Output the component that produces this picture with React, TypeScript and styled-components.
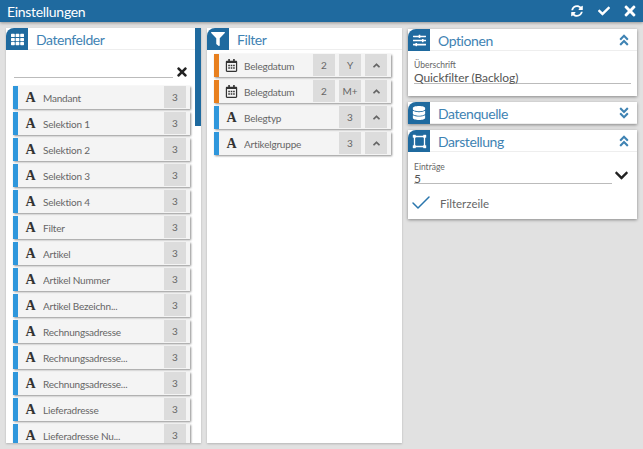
import styled, { createGlobalStyle } from "styled-components"
import {
  FaAngleDoubleDown,
  FaAngleDoubleUp,
  FaAngleUp,
  FaCheck,
  FaChevronDown,
  FaDatabase,
  FaFilter,
  FaRegCalendarAlt,
  FaSlidersH,
  FaSyncAlt,
  FaTh,
  FaTimes,
} from "react-icons/fa"
import { Check } from "lucide-react"

const blue = "#1f6a9f"
const titleBlue = "#3f83b3"

const GlobalStyle = createGlobalStyle`
  html, body {
    margin: 0;
    padding: 0;
    height: 100%;
    background: #e1e1e1;
  }
  body {
    font-family: Lato, "Open Sans", sans-serif;
    color: #444;
    overflow: hidden;
  }
`

const Page = styled.div`
  width: 643px;
  height: 449px;
  display: flex;
  flex-direction: column;
  overflow: hidden;
`

const TopBar = styled.header`
  height: 22px;
  flex: none;
  background: ${blue};
  color: #fff;
  display: flex;
  align-items: center;
  justify-content: space-between;
  padding: 0 5px 0 7px;
  box-shadow: 0 1px 3px rgba(0, 0, 0, 0.35);
  font-size: 14px;
  letter-spacing: -0.3px;
`

const TopActions = styled.div`
  display: flex;
  align-items: center;
  gap: 15px;
  font-size: 12px;

  svg {
    display: block;
  }
  svg:last-child {
    margin-left: -3px;
  }
`

const Columns = styled.main`
  flex: 1;
  display: flex;
  gap: 6px;
  padding: 6px;
  min-height: 0;
`

const Panel = styled.section`
  position: relative;
  width: 195px;
  flex: none;
  background: #fff;
  box-shadow: 0 1px 2px rgba(0, 0, 0, 0.2);
  overflow: hidden;
  display: flex;
  flex-direction: column;
`

const Side = styled.div`
  width: 229px;
  flex: none;
  display: flex;
  flex-direction: column;
  gap: 6px;
  padding-top: 1px;
`

const Card = styled.section`
  background: #fff;
  box-shadow: 0 1px 3px rgba(0, 0, 0, 0.4);
`

const Head = styled.div<{ $inset?: boolean }>`
  height: 22px;
  box-sizing: border-box;
  display: flex;
  align-items: flex-start;
  border-bottom: 1px solid #eee;
  margin-right: ${(p) => (p.$inset ? "6px" : "0")};
  padding-right: 6px;
  flex: none;
`

const IconTab = styled.div`
  width: 22px;
  height: 22px;
  flex: none;
  background: ${blue};
  color: #fff;
  border-top-left-radius: 8px;
  display: flex;
  align-items: center;
  justify-content: center;
  font-size: 13px;
`

const HeadTitle = styled.h2`
  flex: 1;
  margin: 0 0 0 8px;
  font-size: 14px;
  letter-spacing: -0.42px;
  font-weight: 400;
  color: ${titleBlue};
  line-height: 23px;
`

const Collapse = styled.span`
  color: ${titleBlue};
  font-size: 14px;
  height: 22px;
  display: flex;
  align-items: center;
`

const ScrollThumb = styled.div`
  position: absolute;
  top: 0;
  right: 0;
  width: 6px;
  height: 98px;
  background: ${blue};
`

const SearchRow = styled.div`
  display: flex;
  align-items: flex-end;
  gap: 2px;
  padding: 20px 12px 0 8px;
  height: 8px;
  margin-bottom: 8px;
  flex: none;
  color: #222;

  svg {
    display: block;
    flex: none;
    margin-bottom: -1px;
  }
`

const SearchLine = styled.div`
  flex: 1;
  border-bottom: 1px solid #bbb;
  height: 8px;
`

const RowList = styled.div<{ $top: number }>`
  display: flex;
  flex-direction: column;
  gap: 3px;
  padding: ${(p) => p.$top}px 11px 0 7px;
`

const Row = styled.div<{ $accent: string }>`
  height: 23px;
  flex: none;
  display: flex;
  align-items: stretch;
  background: #f4f4f4;
  border-left: 5px solid ${(p) => p.$accent};
  box-shadow: 1px 1px 2px rgba(0, 0, 0, 0.45);
  font-size: 10px;
  letter-spacing: -0.2px;
  color: #666;
  padding-right: 4px;
`

const Glyph = styled.span`
  width: 25px;
  flex: none;
  display: flex;
  align-items: center;
  justify-content: center;
  font-family: "Liberation Serif", serif;
  font-weight: 700;
  font-size: 14px;
  color: #333;
`

const Label = styled.span`
  flex: 1;
  min-width: 0;
  line-height: 24px;
  white-space: nowrap;
  overflow: hidden;
`

const Chip = styled.span`
  width: 22px;
  height: 22px;
  margin-left: 4px;
  flex: none;
  background: #dcdcdc;
  display: flex;
  align-items: center;
  justify-content: center;
  font-size: 10px;
  letter-spacing: 0;
  color: #666;
`

const CardBody = styled.div<{ $top: number; $bottom: number }>`
  padding: ${(p) => p.$top}px 6px ${(p) => p.$bottom}px;
`

const SmallLabel = styled.div`
  font-size: 8.5px;
  line-height: 10px;
  color: #666;
`

const ValueLine = styled.div<{ $height: number }>`
  font-size: 12px;
  letter-spacing: -0.1px;
  line-height: ${(p) => p.$height + 2}px;
  color: #555;
  border-bottom: 1px solid #bbb;
  height: ${(p) => p.$height}px;
  box-sizing: border-box;
  white-space: nowrap;
`

const SelectRow = styled.div`
  display: flex;
  align-items: center;
  gap: 2px;
  color: #222;

  svg {
    margin-right: 2px;
    margin-top: 4px;
  }
`

const SelectField = styled.div`
  flex: 1;
`

const CheckRow = styled.div`
  display: flex;
  align-items: center;
  gap: 7px;
  margin: 7px 0 0 -5px;
  font-size: 11.5px;
  color: #666;
`

const fields = [
  "Mandant",
  "Selektion 1",
  "Selektion 2",
  "Selektion 3",
  "Selektion 4",
  "Filter",
  "Artikel",
  "Artikel Nummer",
  "Artikel Bezeichn...",
  "Rechnungsadresse",
  "Rechnungsadresse...",
  "Rechnungsadresse...",
  "Lieferadresse",
  "Lieferadresse Nu...",
]

const filters = [
  { name: "Belegdatum", date: true, chips: ["2", "Y"] },
  { name: "Belegdatum", date: true, chips: ["2", "M+"] },
  { name: "Belegtyp", date: false, chips: ["3"] },
  { name: "Artikelgruppe", date: false, chips: ["3"] },
]

function FrameIcon() {
  return (
    <svg width="15" height="15" viewBox="0 0 15 15" fill="none" stroke="currentColor">
      <path d="M3 2.5h9M3 12.5h9M2.5 3v9M12.5 3v9" strokeWidth="1.3" />
      <path
        d="M1 1h2.6v2.6H1zM11.4 1H14v2.6h-2.6zM1 11.4h2.6V14H1zM11.4 11.4H14V14h-2.6z"
        fill="currentColor"
        strokeWidth="0.4"
      />
    </svg>
  )
}

function App() {
  return (
    <Page>
      <GlobalStyle />
      <TopBar>
        <span>Einstellungen</span>
        <TopActions>
          <FaSyncAlt />
          <FaCheck />
          <FaTimes size={16} />
        </TopActions>
      </TopBar>
      <Columns>
        <Panel>
          <Head $inset>
            <IconTab><FaTh /></IconTab>
            <HeadTitle>Datenfelder</HeadTitle>
          </Head>
          <SearchRow>
            <SearchLine />
            <FaTimes size={14} />
          </SearchRow>
          <RowList $top={0}>
            {fields.map((name, i) => (
              <Row key={i} $accent="#2f97dc">
                <Glyph>A</Glyph>
                <Label>{name}</Label>
                <Chip>3</Chip>
              </Row>
            ))}
          </RowList>
          <ScrollThumb />
        </Panel>
        <Panel>
          <Head>
            <IconTab><FaFilter size={14} /></IconTab>
            <HeadTitle>Filter</HeadTitle>
          </Head>
          <RowList $top={4}>
            {filters.map((f, i) => (
              <Row key={i} $accent={f.date ? "#e8801f" : "#2f97dc"}>
                <Glyph>{f.date ? <FaRegCalendarAlt size={13} /> : "A"}</Glyph>
                <Label>{f.name}</Label>
                {f.chips.map((c) => (
                  <Chip key={c}>{c}</Chip>
                ))}
                <Chip><FaAngleUp size={11} /></Chip>
              </Row>
            ))}
          </RowList>
        </Panel>
        <Side>
          <Card>
            <Head>
              <IconTab><FaSlidersH /></IconTab>
              <HeadTitle>Optionen</HeadTitle>
              <Collapse><FaAngleDoubleUp /></Collapse>
            </Head>
            <CardBody $top={9} $bottom={12}>
              <SmallLabel>Überschrift</SmallLabel>
              <ValueLine $height={14}>Quickfilter (Backlog)</ValueLine>
            </CardBody>
          </Card>
          <Card>
            <Head>
              <IconTab><FaDatabase size={14} /></IconTab>
              <HeadTitle>Datenquelle</HeadTitle>
              <Collapse><FaAngleDoubleDown /></Collapse>
            </Head>
          </Card>
          <Card>
            <Head>
              <IconTab><FrameIcon /></IconTab>
              <HeadTitle>Darstellung</HeadTitle>
              <Collapse><FaAngleDoubleUp /></Collapse>
            </Head>
            <CardBody $top={10} $bottom={4}>
              <SelectRow>
                <SelectField>
                  <SmallLabel>Einträge</SmallLabel>
                  <ValueLine $height={12}>5</ValueLine>
                </SelectField>
                <FaChevronDown size={15} />
              </SelectRow>
              <CheckRow>
                <Check size={24} color="#2a76ad" strokeWidth={1.5} />
                <span>Filterzeile</span>
              </CheckRow>
            </CardBody>
          </Card>
        </Side>
      </Columns>
    </Page>
  )
}

export default App
